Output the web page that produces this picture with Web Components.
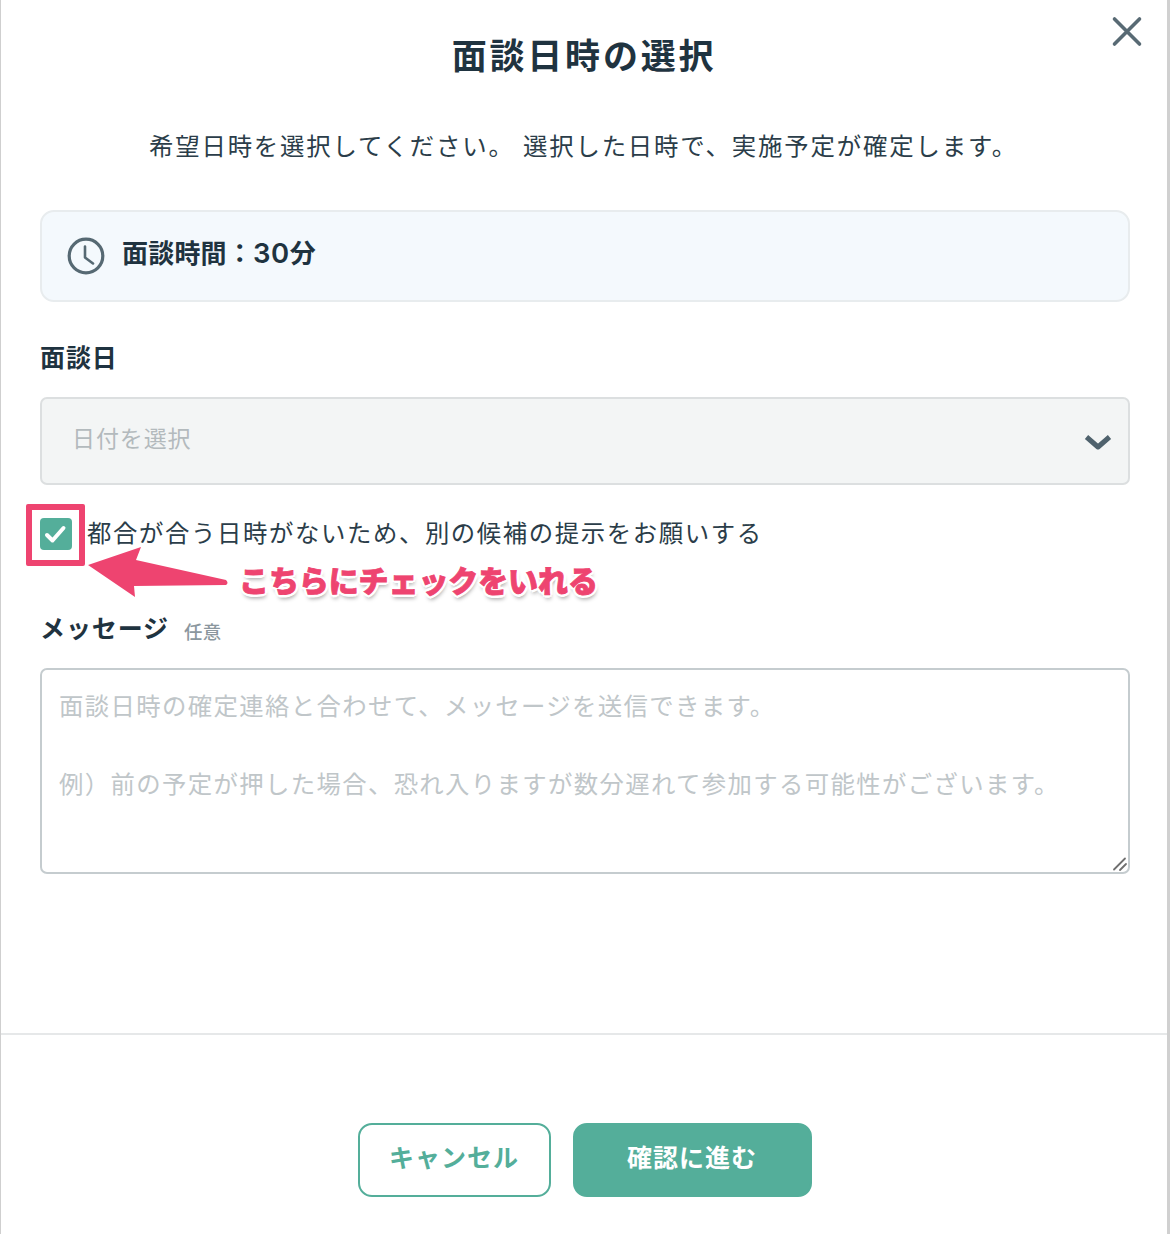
<!DOCTYPE html>
<html lang="ja">
<head>
<meta charset="utf-8">
<title>面談日時の選択</title>
<style>
  html, body { margin: 0; background: #fff; }
  body {
    font-family: "Lato", "Noto Sans CJK JP", sans-serif;
    color: #1f3340;
  }
</style>
</head>
<body>
<interview-dialog>
  <dialog-header slot="header" heading="面談日時の選択"></dialog-header>
  <p-lead>希望日時を選択してください。 選択した日時で、実施予定が確定します。</p-lead>
  <info-bar>面談時間：<b>30</b>分</info-bar>
  <field-label style="--top:41px">面談日</field-label>
  <select-box placeholder="日付を選択"></select-box>
  <check-row>都合が合う日時がないため、別の候補の提示をお願いする</check-row>
  <field-label style="--top:64px" note="任意">メッセージ</field-label>
  <message-box>
    <span>面談日時の確定連絡と合わせて、メッセージを送信できます。</span>
    <span>&nbsp;</span>
    <span>例）前の予定が押した場合、恐れ入りますが数分遅れて参加する可能性がございます。</span>
  </message-box>
  <dialog-footer slot="footer">
    <action-button kind="outline">キャンセル</action-button>
    <action-button kind="solid">確認に進む</action-button>
  </dialog-footer>
  <check-annotation slot="overlay">こちらにチェックをいれる</check-annotation>
</interview-dialog>

<script>
class InterviewDialog extends HTMLElement {
  constructor() {
    super();
    this.attachShadow({ mode: "open" });
    this.shadowRoot.innerHTML = `
      <style>
        :host {
          display: block;
          position: relative;
          width: 1172px;
          height: 1234px;
          box-sizing: border-box;
          overflow: hidden;
        }
        .panel {
          width: 1170px;
          height: 1234px;
          box-sizing: border-box;
          border-left: 1px solid #cfcfcf;
          border-right: 3px solid #d0d0d0;
          display: flex;
          flex-direction: column;
          background: #fff;
        }
        .body {
          flex: 1;
          padding: 0 37px 0 39px;
          display: flex;
          flex-direction: column;
        }
      </style>
      <div class="panel">
        <slot name="header"></slot>
        <div class="body"><slot></slot></div>
        <slot name="footer"></slot>
      </div>
      <slot name="overlay"></slot>
    `;
  }
}

class DialogHeader extends HTMLElement {
  constructor() {
    super();
    this.attachShadow({ mode: "open" });
  }
  connectedCallback() {
    this.shadowRoot.innerHTML = `
      <style>
        :host { display: block; position: relative; height: 112px; }
        h1 {
          margin: 0;
          padding-top: 31px;
          padding-bottom: 1px;
          text-align: center;
          font-size: 35px;
          line-height: 48px;
          font-weight: 700;
          letter-spacing: 2.8px;
          color: #1f3340;
        }
        svg { position: absolute; left: 1110px; top: 14px; }
      </style>
      <h1>${this.getAttribute("heading")}</h1>
      <svg width="32" height="34" viewBox="0 0 32 34" fill="none" stroke="#586a74" stroke-width="3.6" stroke-linecap="round">
        <path d="M3.5 5 L28.5 30 M28.5 5 L3.5 30"/>
      </svg>
    `;
  }
}

class PLead extends HTMLElement {
  constructor() {
    super();
    this.attachShadow({ mode: "open" });
    this.shadowRoot.innerHTML = `
      <style>
        :host {
          display: block;
          text-align: center;
          font-size: 24.4px;
          line-height: 40px;
          letter-spacing: 1.85px;
          color: #2b3d49;
          padding: 14px 0 44px;
          margin-left: -3px;
          white-space: nowrap;
        }
      </style>
      <slot></slot>
    `;
  }
}

class InfoBar extends HTMLElement {
  constructor() {
    super();
    this.attachShadow({ mode: "open" });
    this.shadowRoot.innerHTML = `
      <style>
        :host {
          display: flex;
          align-items: center;
          gap: 18px;
          height: 92px;
          box-sizing: border-box;
          padding: 0 25px;
          background: #f4f9fd;
          border: 2px solid #e8ecee;
          border-radius: 14px;
          font-size: 26px;
          font-weight: 700;
          letter-spacing: 0.2px;
          color: #1f3340;
        }
        span { position: relative; top: -5px; left: -1px; }
        ::slotted(b) { font-family: "Inter", sans-serif; font-size: 27.5px; font-weight: 600; letter-spacing: 0.6px; }
      </style>
      <svg width="38" height="38" viewBox="0 0 38 38" fill="none" stroke="#566973">
        <circle cx="19" cy="19" r="16.8" stroke-width="3.2"/>
        <path d="M18 9.5 V20.5 L26 26.5" stroke-width="2.6" stroke-linecap="round" stroke-linejoin="round"/>
      </svg>
      <span><slot></slot></span>
    `;
  }
}

class FieldLabel extends HTMLElement {
  constructor() {
    super();
    this.attachShadow({ mode: "open" });
  }
  connectedCallback() {
    const note = this.getAttribute("note");
    this.shadowRoot.innerHTML = `
      <style>
        :host {
          display: flex;
          align-items: baseline;
          gap: 15px;
          margin-top: var(--top, 0);
          margin-bottom: 26px;
          height: 28px;
          line-height: 28px;
          font-size: 25px;
          font-weight: 700;
          letter-spacing: 0.9px;
          color: #1f3340;
        }
        small { font-size: 18.4px; font-weight: 500; color: #8b979e; letter-spacing: 0.4px; position: relative; top: 1px; }
      </style>
      <slot></slot>${note ? `<small>${note}</small>` : ""}
    `;
  }
}

class SelectBox extends HTMLElement {
  constructor() {
    super();
    this.attachShadow({ mode: "open" });
  }
  connectedCallback() {
    this.shadowRoot.innerHTML = `
      <style>
        :host {
          display: flex;
          align-items: center;
          justify-content: space-between;
          height: 88px;
          box-sizing: border-box;
          padding: 0 16px 0 30px;
          background: #f3f5f5;
          border: 2px solid #dcdfe0;
          border-radius: 7px;
          font-size: 23px;
          letter-spacing: 0.9px;
          color: #b3babd;
        }
        span { position: relative; top: -4px; }
        svg { position: relative; top: 1px; }
      </style>
      <span>${this.getAttribute("placeholder")}</span>
      <svg width="28" height="18" viewBox="0 0 28 18" fill="none" stroke="#4f626d" stroke-width="5" stroke-linecap="butt" stroke-linejoin="round">
        <path d="M2.5 4 L14 14 L25.5 4"/>
      </svg>
    `;
  }
}

class CheckRow extends HTMLElement {
  constructor() {
    super();
    this.attachShadow({ mode: "open" });
    this.shadowRoot.innerHTML = `
      <style>
        :host {
          display: flex;
          align-items: flex-start;
          gap: 15px;
          margin-top: 33px;
          font-size: 24.4px;
          line-height: 32px;
          letter-spacing: 1.6px;
          color: #2b3d49;
          height: 32px;
        }
        .box {
          width: 32px;
          height: 32px;
          flex: none;
          border-radius: 4px;
          background: #54ae9a;
          display: flex;
          align-items: center;
          justify-content: center;
        }
        span { position: relative; top: -1px; }
      </style>
      <div class="box">
        <svg width="24" height="22" viewBox="0 0 24 22" fill="none" stroke="#fff" stroke-width="4" stroke-linecap="round" stroke-linejoin="round">
          <path d="M3 12 L8.5 17.5 L19.5 5"/>
        </svg>
      </div>
      <span><slot></slot></span>
    `;
  }
}

class MessageBox extends HTMLElement {
  constructor() {
    super();
    this.attachShadow({ mode: "open" });
    this.shadowRoot.innerHTML = `
      <style>
        :host {
          display: flex;
          flex-direction: column;
          position: relative;
          height: 206px;
          box-sizing: border-box;
          padding: 16px 17px;
          border: 2px solid #c5cccf;
          border-radius: 7px;
          font-size: 24.4px;
          line-height: 39px;
          letter-spacing: 1.35px;
          color: #c0c6c9;
          white-space: nowrap;
        }
        ::slotted(span) { display: block; height: 39px; }
        svg { position: absolute; right: 0; bottom: 0; }
      </style>
      <slot></slot>
      <svg width="16" height="16" viewBox="0 0 16 16" fill="none" stroke="#6f6f6f" stroke-width="1.8" stroke-linecap="round">
        <path d="M2 13.5 L13 2.5 M8 14 L14 8"/>
      </svg>
    `;
  }
}

class DialogFooter extends HTMLElement {
  constructor() {
    super();
    this.attachShadow({ mode: "open" });
    this.shadowRoot.innerHTML = `
      <style>
        :host {
          display: flex;
          justify-content: center;
          gap: 22px;
          height: 201px;
          box-sizing: border-box;
          padding: 88px 0 0 1px;
          border-top: 2px solid #e6e8e9;
        }
      </style>
      <slot></slot>
    `;
  }
}

class ActionButton extends HTMLElement {
  constructor() {
    super();
    this.attachShadow({ mode: "open" });
  }
  connectedCallback() {
    const solid = this.getAttribute("kind") === "solid";
    this.shadowRoot.innerHTML = `
      <style>
        :host {
          display: flex;
          align-items: center;
          justify-content: center;
          box-sizing: border-box;
          width: ${solid ? 239 : 193}px;
          height: 74px;
          border-radius: 14px;
          border: 2px solid #54ae9a;
          background: ${solid ? "#54ae9a" : "#fff"};
          color: ${solid ? "#fff" : "#54ae9a"};
          font-size: 25px;
          font-weight: 700;
          letter-spacing: 1px;
        }
        span { position: relative; top: -4px; }
      </style>
      <span><slot></slot></span>
    `;
  }
}

class CheckAnnotation extends HTMLElement {
  constructor() {
    super();
    this.attachShadow({ mode: "open" });
    this.shadowRoot.innerHTML = `
      <style>
        :host { display: block; position: absolute; inset: 0; pointer-events: none; }
        .frame {
          position: absolute;
          left: 26px;
          top: 504px;
          width: 59px;
          height: 62px;
          box-sizing: border-box;
          border: 6px solid #ee4470;
          border-radius: 2px;
        }
        svg { position: absolute; left: 0; top: 0; }
        .label {
          position: absolute;
          left: 239px;
          top: 560px;
          font-size: 30px;
          line-height: 40px;
          font-weight: 900;
          letter-spacing: -0.1px;
          white-space: nowrap;
          color: #ee4470;
          -webkit-text-stroke: 0.8px #ee4470;
          text-shadow:
            3px 0 0 #fff, -3px 0 0 #fff, 0 3px 0 #fff, 0 -3px 0 #fff,
            2px 2px 0 #fff, -2px 2px 0 #fff, 2px -2px 0 #fff, -2px -2px 0 #fff,
            1px 4px 4px rgba(0,0,0,.4);
        }
      </style>
      <div class="frame"></div>
      <svg width="240" height="610" viewBox="0 0 240 610">
        <path d="M88 565 L141 547 L136 560 L226 580 Q229 583 226 585 L134 586 L135 597 Z" fill="#ee4470"/>
      </svg>
      <div class="label"><slot></slot></div>
    `;
  }
}

customElements.define("interview-dialog", InterviewDialog);
customElements.define("dialog-header", DialogHeader);
customElements.define("p-lead", PLead);
customElements.define("info-bar", InfoBar);
customElements.define("field-label", FieldLabel);
customElements.define("select-box", SelectBox);
customElements.define("check-row", CheckRow);
customElements.define("message-box", MessageBox);
customElements.define("dialog-footer", DialogFooter);
customElements.define("action-button", ActionButton);
customElements.define("check-annotation", CheckAnnotation);
</script>
</body>
</html>
